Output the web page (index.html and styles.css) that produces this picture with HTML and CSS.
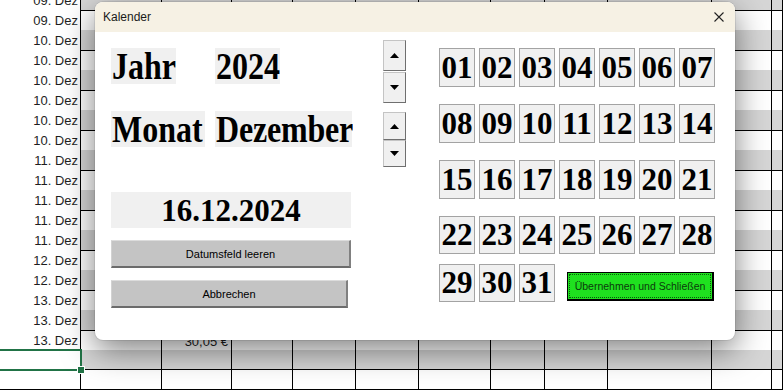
FILE: index.html
```html
<!DOCTYPE html>
<html lang="de">
<head>
<meta charset="utf-8">
<title>Kalender</title>
<link rel="stylesheet" href="styles.css">
</head>
<body>
<div class="sheet">
  <div class="row band"><span class="c0">09. Dez</span><span></span><span></span><span></span><span></span><span></span><span></span><span></span><span></span><span></span><span></span><span></span></div>
  <div class="row"><span class="c0">09. Dez</span><span></span><span></span><span></span><span></span><span></span><span></span><span></span><span></span><span></span><span></span><span></span></div>
  <div class="row band"><span class="c0">10. Dez</span><span></span><span></span><span></span><span></span><span></span><span></span><span></span><span></span><span></span><span></span><span></span></div>
  <div class="row"><span class="c0">10. Dez</span><span></span><span></span><span></span><span></span><span></span><span></span><span></span><span></span><span></span><span></span><span></span></div>
  <div class="row band"><span class="c0">10. Dez</span><span></span><span></span><span></span><span></span><span></span><span></span><span></span><span></span><span></span><span></span><span></span></div>
  <div class="row"><span class="c0">10. Dez</span><span></span><span></span><span></span><span></span><span></span><span></span><span></span><span></span><span></span><span></span><span></span></div>
  <div class="row band"><span class="c0">10. Dez</span><span></span><span></span><span></span><span></span><span></span><span></span><span></span><span></span><span></span><span></span><span></span></div>
  <div class="row"><span class="c0">10. Dez</span><span></span><span></span><span></span><span></span><span></span><span></span><span></span><span></span><span></span><span></span><span></span></div>
  <div class="row band"><span class="c0">11. Dez</span><span></span><span></span><span></span><span></span><span></span><span></span><span></span><span></span><span></span><span></span><span></span></div>
  <div class="row"><span class="c0">11. Dez</span><span></span><span></span><span></span><span></span><span></span><span></span><span></span><span></span><span></span><span></span><span></span></div>
  <div class="row band"><span class="c0">11. Dez</span><span></span><span></span><span></span><span></span><span></span><span></span><span></span><span></span><span></span><span></span><span></span></div>
  <div class="row"><span class="c0">11. Dez</span><span></span><span></span><span></span><span></span><span></span><span></span><span></span><span></span><span></span><span></span><span></span></div>
  <div class="row band"><span class="c0">11. Dez</span><span></span><span></span><span></span><span></span><span></span><span></span><span></span><span></span><span></span><span></span><span></span></div>
  <div class="row"><span class="c0">12. Dez</span><span></span><span></span><span></span><span></span><span></span><span></span><span></span><span></span><span></span><span></span><span></span></div>
  <div class="row band"><span class="c0">12. Dez</span><span></span><span></span><span></span><span></span><span></span><span></span><span></span><span></span><span></span><span></span><span></span></div>
  <div class="row"><span class="c0">13. Dez</span><span></span><span></span><span></span><span></span><span></span><span></span><span></span><span></span><span></span><span></span><span></span></div>
  <div class="row band"><span class="c0">13. Dez</span><span></span><span></span><span></span><span></span><span></span><span></span><span></span><span></span><span></span><span></span><span></span></div>
  <div class="row"><span class="c0">13. Dez</span><span></span><span class="money">30,05 €</span><span></span><span></span><span></span><span></span><span></span><span></span><span></span><span></span><span></span></div>
  <div class="row band"><span class="c0 sel"></span><span></span><span></span><span></span><span></span><span></span><span></span><span></span><span></span><span></span><span></span><span></span></div>
  <div class="row"><span class="c0"></span><span></span><span></span><span></span><span></span><span></span><span></span><span></span><span></span><span></span><span></span><span></span></div>
</div>

<div class="dialog">
  <div class="titlebar">
    <span>Kalender</span>
    <svg class="close" width="10" height="10" viewBox="0 0 10 10"><path d="M0.5 0.5 L9.5 9.5 M9.5 0.5 L0.5 9.5" stroke="#222" stroke-width="1.1" fill="none"/></svg>
  </div>
  <div class="dbody">
    <div class="left">
      <div class="lrow">
        <div class="lbl w-jahr"><span>Jahr</span></div>
        <div class="lbl w-year"><span>2024</span></div>
      </div>
      <div class="lrow r2">
        <div class="lbl w-monat"><span>Monat</span></div>
        <div class="lbl w-month"><span>Dezember</span></div>
      </div>
      <div class="datebox">16.12.2024</div>
      <div class="btn wide">Datumsfeld leeren</div>
      <div class="btn narrow">Abbrechen</div>
    </div>
    <div class="spins">
      <div class="spin s1">
        <div class="sb"><svg width="9" height="5" viewBox="0 0 9 5"><path d="M0 5 L4.5 0 L9 5 Z" fill="#000"/></svg></div>
        <div class="sb"><svg width="9" height="5" viewBox="0 0 9 5"><path d="M0 0 L4.5 5 L9 0 Z" fill="#000"/></svg></div>
      </div>
      <div class="spin s2">
        <div class="sb"><svg width="9" height="5" viewBox="0 0 9 5"><path d="M0 5 L4.5 0 L9 5 Z" fill="#000"/></svg></div>
        <div class="sb"><svg width="9" height="5" viewBox="0 0 9 5"><path d="M0 0 L4.5 5 L9 0 Z" fill="#000"/></svg></div>
      </div>
    </div>
    <div class="days">
      <div class="drow"><div class="day">01</div><div class="day">02</div><div class="day">03</div><div class="day">04</div><div class="day">05</div><div class="day">06</div><div class="day">07</div></div>
      <div class="drow"><div class="day">08</div><div class="day">09</div><div class="day">10</div><div class="day">11</div><div class="day">12</div><div class="day">13</div><div class="day">14</div></div>
      <div class="drow"><div class="day">15</div><div class="day">16</div><div class="day">17</div><div class="day">18</div><div class="day">19</div><div class="day">20</div><div class="day">21</div></div>
      <div class="drow r4"><div class="day">22</div><div class="day">23</div><div class="day">24</div><div class="day">25</div><div class="day">26</div><div class="day">27</div><div class="day">28</div></div>
      <div class="drow r5"><div class="day">29</div><div class="day">30</div><div class="day">31</div><div class="ok">Übernehmen und Schließen</div></div>
    </div>
  </div>
</div>
</body>
</html>
```

FILE: styles.css
```css
* { box-sizing: border-box; margin: 0; padding: 0; }
html, body { width: 783px; height: 390px; overflow: hidden; background: #fff; }
body { font-family: "Liberation Sans", Arial, sans-serif; position: relative; }

/* spreadsheet */
.sheet { margin-top: -10px; }
.row {
  display: grid;
  grid-template-columns: 81px 81px 70px 61px 63px 63px 72px 54px 63px 104px 60px 1fr;
  height: 20px;
}
.row > span { display: block; border-right: 1px solid #000; border-bottom: 1px solid #000; }
.row.band > span { background: #d6d6d6; }
.row > .c0 {
  background: #fff !important;
  text-align: right;
  font-size: 13px;
  line-height: 18px;
  padding: 2px 2px 0 0;
  color: #1e1e1e;
}
.row > .money { text-align: right; font-size: 13px; line-height: 18px; padding: 3px 3px 0 0; color: #1e1e1e; }
.row > .sel { position: relative; }
.row > .sel::before {
  content: ""; position: absolute; left: -3px; top: -1px; right: -2px; bottom: -2px;
  border: 2px solid #217346;
}
.row > .sel::after {
  content: ""; position: absolute; right: -5px; bottom: -5px; width: 6px; height: 6px;
  background: #217346; border: 1px solid #fff;
}

/* dialog */
.dialog {
  position: absolute; left: 95px; top: 2px; width: 640px; height: 338px;
  background: #fff; border-radius: 8px; overflow: hidden;
  box-shadow: 0 10px 32px rgba(0,0,0,.5), 0 0 0 1px rgba(0,0,0,.08);
  display: flex; flex-direction: column;
}
.titlebar {
  height: 30px; flex: none; background: #f6f1e4;
  display: flex; align-items: center; justify-content: space-between;
  padding: 0 11px 0 8px; font-size: 12px; color: #1a1a1a;
}
.dbody { display: flex; align-items: flex-start; padding: 16px 0 0 16px; flex: 1; }

.left { width: 241px; display: flex; flex-direction: column; align-items: flex-start; }
.lrow { display: grid; grid-template-columns: 104px auto; height: 36px; }
.lrow.r2 { margin-top: 27px; }
.lbl {
  background: #f0f0f0; height: 36px;
  font: bold 32px/36px "Liberation Serif", "Times New Roman", serif;
  color: #000; white-space: nowrap; padding-left: 1px;
}
.lbl span { display: inline-block; transform: scaleY(1.17); }
.w-jahr, .w-year { width: 65px; }
.w-monat { width: 94px; }
.w-month { width: 137px; letter-spacing: -0.2px; }

.datebox {
  margin-top: 45px; width: 240px; height: 36px; background: #f0f0f0;
  font: bold 31px/38px "Liberation Serif", "Times New Roman", serif;
  text-align: center; color: #000; overflow: hidden;
}
.btn {
  margin-top: 12px; height: 28px;
  background: #c4c4c4;
  border-top: 1px solid #dcdcdc; border-left: 1px solid #d2d2d2;
  border-bottom: 2px solid #6b6b6b; border-right: 2px solid #808080;
  font-size: 11px; color: #000;
  display: flex; align-items: center; justify-content: center;
}
.btn.wide { width: 240px; }
.btn.narrow { width: 237px; }

.spins { margin-left: 31px; margin-top: -8px; width: 23px; }
.spin { display: flex; flex-direction: column; gap: 1px; }
.spin.s2 { margin-top: 9px; gap: 0; }
.sb {
  width: 23px; height: 31px; background: #f0f0f0;
  border: 1px solid #c4c4c4; border-right-color: #6f6f6f; border-bottom-color: #6f6f6f;
  display: flex; align-items: center; justify-content: center;
}
.s2 .sb:first-child { height: 28px; }
.s2 .sb:last-child { height: 27px; }

.days { margin-left: 33px; }
.drow { display: flex; gap: 4px; height: 39px; align-items: flex-start; }
.drow + .drow { margin-top: 17px; }
.drow.r4 { height: 38px; }
.drow.r5 { height: 38px; margin-top: 10px; }
.day {
  width: 36px; height: 100%; background: #f0f0f0; border: 1px solid #a3a3a3;
  font: bold 31px "Liberation Serif", "Times New Roman", serif; color: #000;
  display: flex; align-items: center; justify-content: center;
}
.r4 .day, .r5 .day { height: 38px; }
.ok {
  margin-left: 8px; margin-top: 8px; width: 147px; height: 29px;
  background: #1fe11f; border: 1px solid #000; border-right-width: 2px; border-bottom-width: 2px;
  font-size: 10.5px; color: #0c3a0c; position: relative;
  display: flex; align-items: center; justify-content: center;
}
.ok::after {
  content: ""; position: absolute; left: 1px; top: 1px; right: 1px; bottom: 1px;
  border: 1px dotted #0a5a0a;
}
```
